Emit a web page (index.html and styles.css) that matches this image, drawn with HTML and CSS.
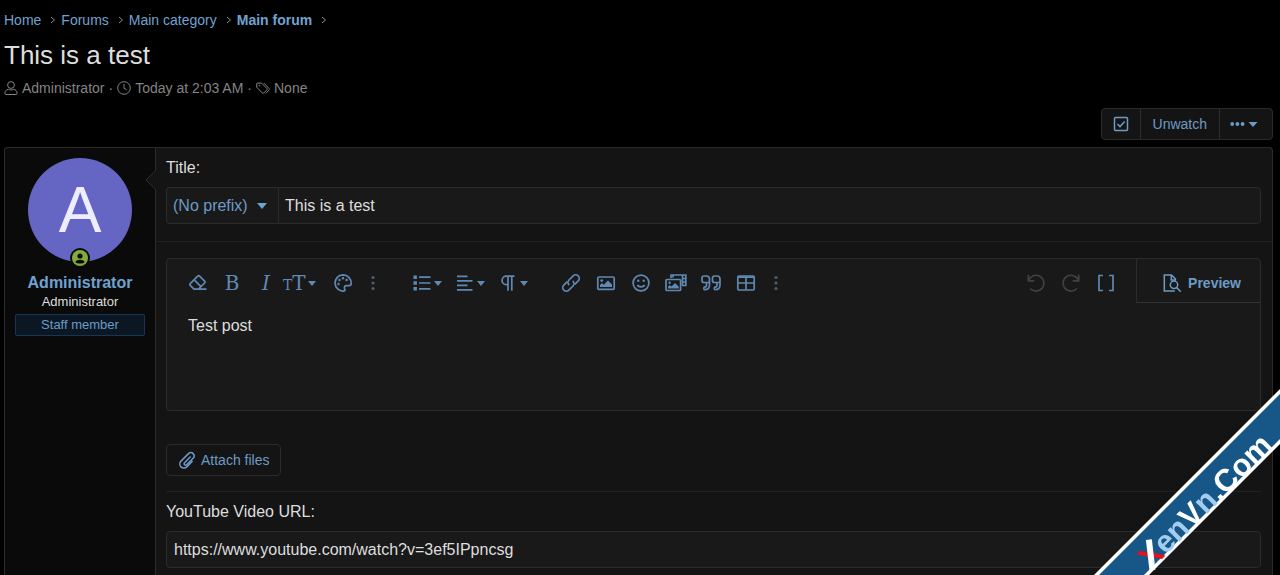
FILE: index.html
```html
<!DOCTYPE html>
<html lang="en">
<head>
  <meta charset="UTF-8">
  <meta name="viewport" content="width=device-width, initial-scale=1">
  <title>This is a test</title>
  <link rel="stylesheet" href="styles.css">
</head>
<body>

  <nav class="breadcrumb" aria-label="Breadcrumb">
    <a href="#">Home</a>
    <svg class="sep" viewBox="0 0 6 8"><path d="M1 1l3.500 3L1 7"/></svg>
    <a href="#">Forums</a>
    <svg class="sep" viewBox="0 0 6 8"><path d="M1 1l3.500 3L1 7"/></svg>
    <a href="#">Main category</a>
    <svg class="sep" viewBox="0 0 6 8"><path d="M1 1l3.500 3L1 7"/></svg>
    <a href="#" class="current">Main forum</a>
    <svg class="sep" viewBox="0 0 6 8"><path d="M1 1l3.500 3L1 7"/></svg>
  </nav>

  <h1>This is a test</h1>

  <div class="meta">
    <svg class="icon-meta" viewBox="0 0 14 14"><circle cx="7" cy="4" r="3.400"/><path d="M4.300 8.300C2.300 8.700 1 10 1 12v.500c0 .600.400 1 1 1h10c.600 0 1-.400 1-1V12c0-2-1.300-3.300-3.300-3.700-1.700.900-3.700.900-5.400 0z"/></svg>
    <span>Administrator</span>
    <span>·</span>
    <svg class="icon-meta" viewBox="0 0 14 14"><circle cx="7" cy="7" r="6.300"/><path d="M7 3v4.300l2.600 1.500"/></svg>
    <span>Today at 2:03 AM</span>
    <span>·</span>
    <svg class="icon-meta" viewBox="0 0 14 14"><path d="M.7 2.500v3.600L6.300 12c.500.500 1 .500 1.500 0l3-3.100c.400-.500.400-1 0-1.500L5.500 2.100H1.200zM7.800 2.100l5.300 5.400c.400.400.400 1 0 1.400l-3.300 3.500"/><circle cx="3.300" cy="4.600" r=".4"/></svg>
    <span>None</span>
  </div>

  <div class="actions">
    <div class="button-group">
      <button type="button" class="btn-check" aria-label="Select">
        <svg width="16" height="16" viewBox="0 0 16 16"><rect x="1.500" y="1.500" width="13" height="13" rx="1"/><path d="M4.500 8l2.500 2.600 4.700-5"/></svg>
      </button>
      <button type="button" class="btn-watch">Unwatch</button>
      <button type="button" class="btn-more" aria-label="More options">
        <svg width="28" height="8" viewBox="0 0 28 8"><g class="fill"><circle cx="2.200" cy="4" r="1.900"/><circle cx="7.400" cy="4" r="1.900"/><circle cx="12.600" cy="4" r="1.900"/><path d="M18.500 2h9L23 7z"/></g></svg>
      </button>
    </div>
  </div>

  <main class="post">
    <aside class="user">
      <a href="#" class="avatar">A
        <span class="online">
          <svg width="20" height="20" viewBox="0 0 20 20"><circle class="ring" cx="10" cy="10" r="10"/><circle class="dot" cx="10" cy="10" r="8"/><circle class="ring" cx="10" cy="8" r="2.600"/><path class="ring" d="M5.300 13.900c1.200-3 8.200-3 9.400 0-1.700 2.200-7.700 2.200-9.400 0z"/></svg>
        </span>
      </a>
      <a href="#" class="user-name">Administrator</a>
      <div class="user-title">Administrator</div>
      <div class="user-banner">Staff member</div>
    </aside>

    <form class="content">
      <svg class="pointer" viewBox="0 0 11 20"><path d="M11 0L1 10l10 10"/></svg>

      <div class="section">
        <label for="title">Title:</label>
        <div class="title-row">
          <select class="prefix" aria-label="Prefix">
            <option>(No prefix)</option>
          </select>
          <input type="text" id="title" value="This is a test">
        </div>
      </div>

      <div class="section section-editor">
        <div class="editor">
          <div class="toolbar">
            <div class="tools tools-text">
              <button type="button" class="tool" aria-label="Remove formatting"><svg width="20" height="20" viewBox="0 0 20 20"><path d="M6 16.200l-3.800-3.800c-.6-.6-.6-1.200 0-1.800l7.500-7.400c.6-.6 1.300-.6 1.900 0l5 5c.6.600.6 1.200 0 1.800l-6.100 6.200zM6.300 6.900l6.400 6.400M6 16.200h12.500"/></svg></button>
              <button type="button" class="tool letter" aria-label="Bold">B</button>
              <button type="button" class="tool letter italic" aria-label="Italic">I</button>
              <button type="button" class="tool wide letter" aria-label="Font size"><span class="small-t">T</span>T<svg class="caret" viewBox="0 0 8 5"><path d="M0 0h8L4 5z"/></svg></button>
              <button type="button" class="tool" aria-label="Text color"><svg width="20" height="20" viewBox="0 0 20 20"><path d="M10 1.800a8.200 8.200 0 1 0 .5 16.400c1.300-.1 1.700-1.200 1.200-2.300-.8-1.900-.1-3.300 1.800-3.300h2.600c1.200 0 2.100-.8 2.100-2.100C18.200 5.700 14.600 1.800 10 1.800z"/><g class="fill"><circle cx="5.500" cy="11" r="1.200"/><circle cx="6.500" cy="7" r="1.200"/><circle cx="10" cy="5.200" r="1.200"/><circle cx="13.600" cy="7" r="1.200"/></g></svg></button>
              <button type="button" class="tool narrow" aria-label="More text options"><svg width="4" height="16" viewBox="0 0 4 16"><g class="fill"><circle cx="2" cy="2.500" r="1.600"/><circle cx="2" cy="8" r="1.600"/><circle cx="2" cy="13.500" r="1.600"/></g></svg></button>
            </div>
            <div class="tools">
              <button type="button" class="tool wide" aria-label="List"><svg width="20" height="20" viewBox="0 0 20 20"><path d="M7 4.200h11.500M7 10h11.500M7 15.800h11.500"/><g class="fill"><path d="M1.500 2.500h3.400v3.400H1.500zM1.500 8.300h3.400v3.400H1.500zM1.500 14.100h3.400v3.400H1.500z"/></g></svg><svg class="caret" viewBox="0 0 8 5"><path d="M0 0h8L4 5z"/></svg></button>
              <button type="button" class="tool wide" aria-label="Alignment"><svg width="20" height="20" viewBox="0 0 20 20"><path d="M2 3.300h10.500M2 7.800h15.500M2 12.300h10.500M2 16.800h15.500"/></svg><svg class="caret" viewBox="0 0 8 5"><path d="M0 0h8L4 5z"/></svg></button>
              <button type="button" class="tool wide" aria-label="Paragraph format"><svg width="20" height="20" viewBox="0 0 20 20"><path d="M16.500 3.200H8.300a4.200 4.200 0 0 0 0 8.400H10M10 3.200v14.600M13.800 3.200v14.600"/></svg><svg class="caret" viewBox="0 0 8 5"><path d="M0 0h8L4 5z"/></svg></button>
            </div>
            <div class="tools">
              <button type="button" class="tool" aria-label="Insert link"><svg width="20" height="20" viewBox="0 0 20 20"><path d="M8.300 12.200A3.700 3.700 0 0 1 8 7l4.200-4.100a3.500 3.500 0 0 1 5 5l-3.400 3.400M11.700 7.800a3.700 3.700 0 0 1 .3 5.200l-4.200 4.100a3.500 3.500 0 0 1-5-5l3.400-3.400"/></svg></button>
              <button type="button" class="tool" aria-label="Insert image"><svg width="20" height="20" viewBox="0 0 20 20"><rect x="1.800" y="4" width="16.400" height="12.400" rx="1.200"/><g class="fill"><circle cx="5.700" cy="7.600" r="1.400"/><path d="M4 14v-2l2-2 1.800 1.700L12 7.500l4 4V14z"/></g></svg></button>
              <button type="button" class="tool" aria-label="Smilies"><svg width="20" height="20" viewBox="0 0 20 20"><circle cx="10" cy="10" r="7.900"/><path d="M6.300 12c1.500 2.500 5.900 2.500 7.400 0"/><g class="fill"><circle cx="7.300" cy="7.800" r="1.200"/><circle cx="12.700" cy="7.800" r="1.200"/></g></svg></button>
              <button type="button" class="tool" aria-label="Media"><svg width="24" height="20" viewBox="0 0 24 20"><path d="M7 5V2h14.800v10.500H18M18.500 2v10.500M18.500 5.500h3M18.500 9h3M9 4.500V2"/><rect x="2" y="6.500" width="14.600" height="11" rx="1"/><g class="fill"><circle cx="5.600" cy="9.800" r="1.200"/><path d="M4 15.600v-1.800l1.800-1.700 1.600 1.500 3.700-3.600 3.700 3.700v1.900z"/></g></svg></button>
              <button type="button" class="tool" aria-label="Quote"><svg width="22" height="20" viewBox="0 0 22 20"><path d="M9.500 9.500H4c-1.200 0-2-.8-2-2V5c0-1.200.8-2 2-2h2.500c1.800 0 3 1.200 3 3v6c0 2.700-1.900 4.700-5 4.700-.9 0-.9-2.500 0-2.500 1.300 0 2-1 2-2.200V9.500M20 9.500h-5.500c-1.200 0-2-.8-2-2V5c0-1.200.8-2 2-2H17c1.800 0 3 1.200 3 3v6c0 2.700-1.900 4.700-5 4.700-.9 0-.9-2.500 0-2.500 1.300 0 2-1 2-2.200V9.500"/></svg></button>
              <button type="button" class="tool" aria-label="Insert table"><svg width="20" height="20" viewBox="0 0 20 20"><rect x="1.800" y="3" width="16.400" height="14" rx="1.200"/><path d="M2 10h16M10 3v14M2 4.200h16"/></svg></button>
              <button type="button" class="tool narrow" aria-label="More options"><svg width="4" height="16" viewBox="0 0 4 16"><g class="fill"><circle cx="2" cy="2.500" r="1.600"/><circle cx="2" cy="8" r="1.600"/><circle cx="2" cy="13.500" r="1.600"/></g></svg></button>
            </div>
            <div class="tools tools-end">
              <button type="button" class="tool" aria-label="Undo" disabled><svg width="20" height="20" viewBox="0 0 20 20"><path d="M2.300 1.800v6h6M2.600 7.500a7.900 7.900 0 1 1 1.600 8"/></svg></button>
              <button type="button" class="tool" aria-label="Redo" disabled><svg width="20" height="20" viewBox="0 0 20 20"><path d="M17.700 1.800v6h-6M17.400 7.500a7.900 7.900 0 1 0-1.600 8"/></svg></button>
              <button type="button" class="tool" aria-label="Toggle BB code"><svg width="20" height="20" viewBox="0 0 20 20"><path d="M7 2.500H3v15h4M13 2.500h4v15h-4"/></svg></button>
            </div>
            <button type="button" class="preview">
              <svg width="20" height="20" viewBox="0 0 20 20"><path d="M14 6.500L9.500 2H2.300v16h10.500M9.300 2v5H14M14.500 14.500l4.300 4.300"/><circle cx="12" cy="11.800" r="3.700"/></svg>
              Preview
            </button>
          </div>
          <textarea aria-label="Message">Test post</textarea>
        </div>

        <button type="button" class="attach">
          <svg width="18" height="18" viewBox="0 0 18 18"><path d="M12.600 5.600l-6 6.200a1.400 1.400 0 0 0 2 2l6.500-6.600a3.200 3.200 0 0 0-4.600-4.600L3 10.100a4.100 4.100 0 0 0 5.800 5.800l5.800-5.900"/></svg>
          Attach files
        </button>

        <div class="field">
          <label for="youtube">YouTube Video URL:</label>
          <input type="text" id="youtube" value="https://www.youtube.com/watch?v=3ef5IPpncsg">
        </div>
      </div>
    </form>
  </main>

  <!-- corner ribbon -->
  <svg class="ribbon" width="186" height="186" viewBox="0 0 186 186">
    <path class="edge" d="M186 0v55L55 186H0z"/>
    <path class="band" d="M186 5v45L50 186H5z"/>
    <g transform="translate(57 181) rotate(-45)">
      <text class="ribbon-text"><tspan class="red">X</tspan><tspan class="pale">en</tspan><tspan>V</tspan><tspan class="pale">n</tspan><tspan>.Com</tspan></text>
      <path class="slash" d="M1 1L20 -23"/>
    </g>
  </svg>

</body>
</html>
```
FILE: styles.css
```css
* {
  box-sizing: border-box;
}

body {
  font-family: "Liberation Sans", Arial, sans-serif;
  font-size: 16px;
  background: #000;
  color: #dedede;
  display: flex;
  flex-direction: column;
  min-height: 100vh;
  margin: 0;
  padding: 10px 7px 0 4px;
}

a {
  color: #6fa3d2;
  text-decoration: none;
}

a:hover {
  text-decoration: underline;
}

button,
input,
select,
textarea {
  font: inherit;
  color: inherit;
  margin: 0;
}

button {
  cursor: pointer;
}

svg {
  fill: none;
  stroke: currentColor;
  flex-shrink: 0;
}

.fill {
  fill: currentColor;
  stroke: none;
}

/* page header */
.breadcrumb {
  display: flex;
  align-items: center;
  font-size: 14px;
  line-height: 20px;
}

.breadcrumb .current {
  font-weight: bold;
}

.sep {
  width: 6px;
  height: 8px;
  margin: 0 5px 0 9px;
  color: #8d8d8d;
}

h1 {
  font-size: 26px;
  font-weight: normal;
  line-height: 32px;
  margin: 9px 0 8px;
}

.meta {
  display: flex;
  align-items: center;
  gap: 4px;
  font-size: 14px;
  line-height: 18px;
  color: #848484;
}

.icon-meta {
  width: 14px;
  height: 14px;
}

.actions {
  display: flex;
  justify-content: flex-end;
  margin: 11px 0 7px;
}

.button-group {
  display: flex;
  height: 32px;
  border: 1px solid #2b2b2b;
  border-radius: 4px;
  background: #141414;
}

.button-group button {
  display: flex;
  align-items: center;
  padding: 0 11px;
  border: 0;
  border-left: 1px solid #2b2b2b;
  background: none;
  color: #6c9bc6;
  font-size: 14px;
}

.button-group button:first-child {
  border-left: 0;
}

.btn-check svg {
  stroke-width: 1.5;
}

.button-group .btn-watch {
  padding: 0 12px;
}

.button-group .btn-more {
  padding: 0 14px 0 10px;
}

/* post */
.post {
  flex: 1;
  display: flex;
  border: 1px solid #2b2b2b;
  border-bottom: 0;
  border-radius: 4px 4px 0 0;
  background: #141414;
}

.user {
  width: 151px;
  padding: 10px;
  background: #0a0a0a;
  border-right: 1px solid #2b2b2b;
  border-radius: 4px 0 0 0;
  text-align: center;
}

.avatar {
  position: relative;
  display: block;
  width: 104px;
  height: 104px;
  margin: 0 auto 11px;
  border-radius: 50%;
  background: #6565c3;
  color: #ededff;
  font-size: 64px;
  line-height: 104px;
}

.online {
  position: absolute;
  left: 42px;
  bottom: -6px;
  line-height: 0;
}

.online svg {
  stroke: none;
}

.online .ring {
  fill: #0a0a0a;
}

.online .dot {
  fill: #83ad3a;
}

.user-name {
  display: block;
  font-weight: bold;
  line-height: 20px;
}

.user-title {
  font-size: 13px;
  line-height: 18px;
  margin-bottom: 3px;
}

.user-banner {
  border: 1px solid #173654;
  border-radius: 2px;
  background: #0b1824;
  color: #6c9bc6;
  font-size: 13px;
  line-height: 20px;
}

.content {
  position: relative;
  flex: 1;
  min-width: 0;
}

.pointer {
  position: absolute;
  left: -11px;
  top: 22px;
  width: 11px;
  height: 20px;
  fill: #141414;
  stroke: #2b2b2b;
}

.section {
  padding: 10px 11px 17px 10px;
  border-bottom: 1px solid #202020;
}

.section-editor {
  padding-top: 16px;
  padding-bottom: 6px;
  border-bottom: 0;
}

label {
  display: block;
  line-height: 20px;
  margin-bottom: 9px;
}

input,
.prefix {
  height: 37px;
  padding: 0 7px;
  border: 1px solid #2b2b2b;
  border-radius: 4px;
  background-color: #191919;
}

input {
  width: 100%;
}

input:focus,
textarea:focus {
  outline: none;
  border-color: #3b5b7a;
}

.title-row {
  display: flex;
}

.title-row input {
  flex: 1;
  padding-left: 6px;
  border-radius: 0 4px 4px 0;
}

.prefix {
  appearance: none;
  width: 112px;
  padding-left: 6px;
  border-right: 0;
  border-radius: 4px 0 0 4px;
  color: #6c9bc6;
  background-image: url("data:image/svg+xml,%3Csvg xmlns='http://www.w3.org/2000/svg' width='10' height='6'%3E%3Cpath d='M0 0h10L5 6z' fill='%236fa3d2'/%3E%3C/svg%3E");
  background-repeat: no-repeat;
  background-position: right 11px center;
}

/* editor */
.editor {
  border: 1px solid #2b2b2b;
  border-radius: 4px;
  background: #191919;
}

.toolbar {
  display: flex;
  height: 44px;
  padding-left: 14px;
}

.tools {
  display: flex;
  align-items: center;
  margin-right: 19px;
  padding-top: 4px;
}

.tools-end {
  margin-left: auto;
  margin-right: 13px;
}

.tool {
  display: flex;
  align-items: center;
  justify-content: center;
  width: 35px;
  height: 36px;
  padding: 0;
  border: 0;
  background: none;
  color: #5f89b3;
}

.tools-text .tool {
  width: 34px;
}

.tool svg {
  stroke-width: 1.7;
}

.tool:disabled {
  color: #414141;
  cursor: default;
}

.tools .wide {
  width: 43px;
}

.tools .narrow {
  width: 26px;
  color: #4d5e70;
}

.letter {
  font-family: "DejaVu Serif", serif;
  font-size: 20px;
}

.italic {
  font-style: italic;
}

.tools .letter.wide {
  justify-content: flex-start;
}

.letter .small-t {
  font-size: 14px;
  padding-top: 4px;
}

.tool .caret {
  width: 8px;
  height: 5px;
  margin-left: 2px;
  fill: currentColor;
  stroke: none;
}

.preview {
  display: flex;
  align-items: center;
  gap: 6px;
  padding: 4px 19px 0 25px;
  border: 0;
  border-left: 1px solid #2b2b2b;
  border-bottom: 1px solid #333;
  background: none;
  color: #6c9bc6;
  font-size: 14px;
  font-weight: bold;
}

.preview svg {
  stroke-width: 1.5;
}

textarea {
  display: block;
  width: 100%;
  height: 107px;
  padding: 13px 21px;
  border: 0;
  background: none;
  line-height: 20px;
  resize: none;
}

.attach {
  display: flex;
  align-items: center;
  gap: 5px;
  height: 32px;
  margin: 33px 0 15px;
  padding: 0 11px;
  border: 1px solid #2b2b2b;
  border-radius: 4px;
  background: #141414;
  color: #6c9bc6;
  font-size: 14px;
}

.attach svg {
  stroke-width: 1.5;
}

.field {
  padding-top: 10px;
  border-top: 1px solid #202020;
}

/* ribbon */
.ribbon {
  position: fixed;
  right: 0;
  bottom: 0;
  stroke: none;
  pointer-events: none;
}

.edge {
  fill: #fff;
}

.band {
  fill: #165788;
}

.ribbon-text {
  font-family: "Liberation Sans", Arial, sans-serif;
  font-size: 31px;
  font-weight: bold;
  fill: #fff;
}

.red {
  fill: #f00c18;
}

.pale {
  fill: #a3cdf0;
}

.slash {
  stroke: #fff;
  stroke-width: 6;
}
```
